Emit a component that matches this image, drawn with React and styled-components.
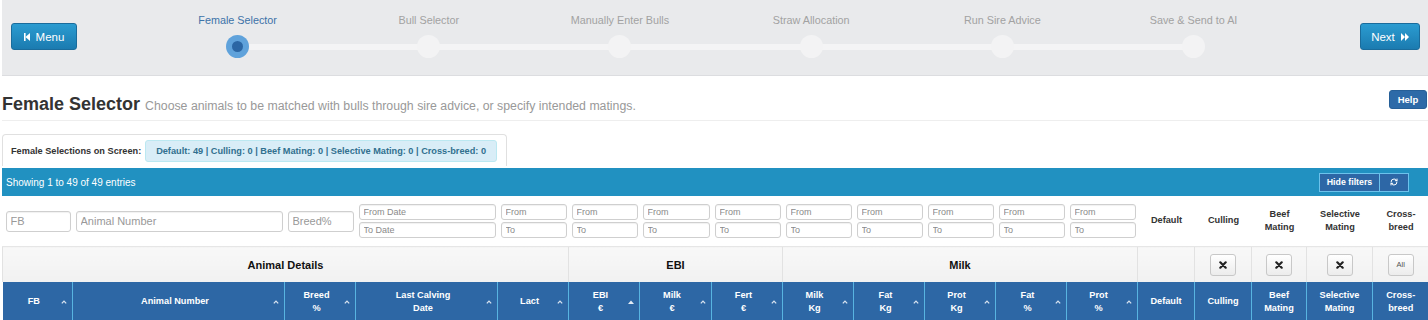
import React from 'react';
import styled, { createGlobalStyle } from 'styled-components';
import { RefreshCw } from 'lucide-react';

const GlobalStyle = createGlobalStyle`
  html, body {
    margin: 0;
    padding: 0;
    background: #fff;
    font-family: "Liberation Sans", Arial, sans-serif;
    color: #333;
    overflow: hidden;
  }
`;

const Page = styled.div`
  width: 1426px;
  padding-left: 2px;
`;

/* ---------- top wizard bar ---------- */
const TopBar = styled.div`
  display: flex;
  align-items: flex-start;
  height: 76px;
  background: #e9eaec;
  border-bottom: 1px solid #dcdde0;
  padding: 0 8px 0 9px;
  box-sizing: border-box;
`;

const NavButton = styled.button`
  margin-top: 23px;
  height: 27px;
  width: ${p => p.$w}px;
  display: flex;
  align-items: center;
  justify-content: center;
  gap: 6px;
  border: 1px solid #1a6c9c;
  border-radius: 3px;
  background: linear-gradient(#2b9cd1, #1b7bb0);
  color: #fff;
  font-family: inherit;
  font-size: 11.5px;
  padding: 0;
  margin-left: ${p => (p.$right ? 'auto' : '0')};
`;

const Stepper = styled.div`
  display: flex;
  margin-top: 14px;
  margin-left: 65px;
`;

const Step = styled.div`
  position: relative;
  width: 191.2px;
  display: flex;
  flex-direction: column;
  align-items: center;
  gap: 8px;

  &:not(:first-child)::before {
    content: '';
    position: absolute;
    left: -50%;
    right: 50%;
    top: 30px;
    height: 6px;
    background: #f4f4f5;
  }
`;

const StepLabel = styled.div`
  font-size: 10.8px;
  line-height: 13px;
  color: ${p => (p.$active ? '#3d72a8' : '#a2a2a2')};
  white-space: nowrap;
`;

const StepDot = styled.div`
  position: relative;
  z-index: 1;
  width: 23px;
  height: 23px;
  border-radius: 50%;
  background: ${p => (p.$active ? '#5fa2db' : '#f3f3f4')};
  display: flex;
  align-items: center;
  justify-content: center;

  &::after {
    content: '';
    display: ${p => (p.$active ? 'block' : 'none')};
    width: 11px;
    height: 11px;
    border-radius: 50%;
    background: #2b66a4;
  }
`;

/* ---------- title ---------- */
const TitleRow = styled.div`
  display: flex;
  align-items: flex-start;
  justify-content: space-between;
  padding: 14px 1px 3px 0;
  border-bottom: 1px solid #eeeeee;
`;

const Title = styled.h1`
  margin: 3px 0 0;
  font-size: 18px;
  line-height: 22px;
  font-weight: bold;
  color: #333;

  small {
    font-size: 12.3px;
    font-weight: normal;
    color: #999;
    margin-left: 5px;
  }
`;

const HelpButton = styled.button`
  height: 19px;
  width: 38px;
  padding: 0;
  border: 1px solid #265f98;
  border-radius: 3px;
  background: #2d6aa8;
  color: #fff;
  font-family: inherit;
  font-weight: bold;
  font-size: 9.5px;
`;

/* ---------- selection summary ---------- */
const SelectionBox = styled.div`
  margin-top: 13px;
  width: 505px;
  height: 32px;
  box-sizing: border-box;
  border: 1px solid #e0e0e0;
  border-bottom: none;
  border-radius: 4px 4px 0 0;
  display: flex;
  align-items: center;
  padding: 0 9px 0 8px;
  font-size: 9.2px;
  font-weight: bold;
`;

const Badge = styled.div`
  margin-left: auto;
  height: 22px;
  line-height: 20px;
  box-sizing: border-box;
  padding: 0 10px;
  background: #d9edf7;
  border: 1px solid #bce8f1;
  border-radius: 3px;
  color: #31708f;
`;

/* ---------- table toolbar ---------- */
const Toolbar = styled.div`
  margin-top: 2px;
  height: 28px;
  background: #2191c1;
  display: flex;
  align-items: center;
  padding: 0 19px 0 4px;
  color: #fff;
  font-size: 10px;
`;

const ToolGroup = styled.div`
  margin-left: auto;
  display: flex;
`;

const ToolButton = styled.button`
  height: 19px;
  width: ${p => p.$w}px;
  padding: 0;
  display: flex;
  align-items: center;
  justify-content: center;
  background: #2d67a6;
  border: 1px solid #6cc2ec;
  margin-left: -1px;
  color: #fff;
  font-family: inherit;
  font-weight: bold;
  font-size: 8.8px;
`;

/* ---------- grid ---------- */
const Table = styled.table`
  border-collapse: collapse;
  border-spacing: 0;
  table-layout: fixed;
  width: 1426px;
`;

const FilterCell = styled.td`
  height: 50px;
  padding: 0 2px 0 3px;
  vertical-align: middle;
  text-align: center;
  font-size: 9.2px;
  font-weight: bold;
  line-height: 13.5px;
  color: #333;
`;

const FilterInput = styled.input`
  display: block;
  width: 100%;
  box-sizing: border-box;
  height: ${p => (p.$small ? 16 : 21)}px;
  margin: ${p => (p.$small ? '2px 0' : '0')};
  padding: 0 4px;
  border: 1px solid #cfcfcf;
  border-radius: 3px;
  box-shadow: inset 0 1px 1px rgba(0, 0, 0, 0.06);
  font-family: inherit;
  font-size: ${p => (p.$small ? 9 : 11)}px;
  color: #555;

  &::placeholder {
    color: ${p => (p.$small ? '#8a8a8a' : '#999')};
  }
`;

const GroupCell = styled.td`
  height: 35px;
  padding: 0;
  background: linear-gradient(#f8f8f8, #f1f1f1);
  border-top: 1px solid #e6e6e6;
  border-left: 1px solid #e2e2e2;
  text-align: center;
  font-size: 11px;
  font-weight: bold;
  color: #111;
`;

const ClearButton = styled.button`
  width: 26px;
  height: 22px;
  padding: 0;
  display: inline-flex;
  align-items: center;
  justify-content: center;
  background: linear-gradient(#fff, #ececec);
  border: 1px solid #c8c8c8;
  border-radius: 3px;
  font-family: inherit;
  font-size: 7.5px;
  color: #555;
  vertical-align: middle;
`;

const HeadCell = styled.th`
  height: 40px;
  padding: 0 ${p => (p.$sort ? 5 : 3)}px 0 ${p => (p.$sort ? 4 : 3)}px;
  background: #2d67a5;
  border-left: 1px solid #58b4e1;
  color: #fff;
  font-size: 9.2px;
  font-weight: bold;
  line-height: 13.5px;
  vertical-align: middle;

  &:first-child {
    border-left: none;
  }
`;

const HeadInner = styled.div`
  display: flex;
  align-items: center;
`;

const HeadText = styled.span`
  flex: 1;
  text-align: center;
`;

const Caret = ({ sorted }) =>
  sorted ? (
    <svg width="6" height="4" viewBox="0 0 6 4">
      <path d="M0 4 L3 0.5 L6 4 Z" fill="#e4ecf5" />
    </svg>
  ) : (
    <svg width="6" height="4" viewBox="0 0 6 4">
      <path d="M0.8 3.4 L3 1.1 L5.2 3.4" fill="none" stroke="#d8e3f0" strokeWidth="1.3" />
    </svg>
  );

const StepBackIcon = () => (
  <svg width="6" height="8" viewBox="0 0 6 8">
    <rect x="0" y="0" width="1.6" height="8" fill="#fff" />
    <path d="M6 0 L1.4 4 L6 8 Z" fill="#fff" />
  </svg>
);

const ForwardIcon = () => (
  <svg width="8" height="8" viewBox="0 0 8 8">
    <path d="M0 0 L4 4 L0 8 Z M4 0 L8 4 L4 8 Z" fill="#fff" />
  </svg>
);

const XIcon = () => (
  <svg width="8" height="8" viewBox="0 0 8 8">
    <path d="M1.3 1.3 L6.7 6.7 M6.7 1.3 L1.3 6.7" stroke="#222" strokeWidth="2.2" strokeLinecap="round" />
  </svg>
);

const steps = [
  'Female Selector',
  'Bull Selector',
  'Manually Enter Bulls',
  'Straw Allocation',
  'Run Sire Advice',
  'Save & Send to AI',
];

const columns = [
  { w: 70, head: ['FB'], sort: true, filter: { type: 'text', ph: 'FB' } },
  { w: 212, head: ['Animal Number'], sort: true, filter: { type: 'text', ph: 'Animal Number' } },
  { w: 71, head: ['Breed', '%'], sort: true, filter: { type: 'text', ph: 'Breed%' } },
  { w: 142, head: ['Last Calving', 'Date'], sort: true, filter: { type: 'date' } },
  { w: 71, head: ['Lact'], sort: true, filter: { type: 'range' } },
  { w: 71, head: ['EBI', '€'], sort: true, sorted: true, filter: { type: 'range' } },
  { w: 72, head: ['Milk', '€'], sort: true, filter: { type: 'range' } },
  { w: 71, head: ['Fert', '€'], sort: true, filter: { type: 'range' } },
  { w: 71, head: ['Milk', 'Kg'], sort: true, filter: { type: 'range' } },
  { w: 71, head: ['Fat', 'Kg'], sort: true, filter: { type: 'range' } },
  { w: 71, head: ['Prot', 'Kg'], sort: true, filter: { type: 'range' } },
  { w: 71, head: ['Fat', '%'], sort: true, filter: { type: 'range' } },
  { w: 71, head: ['Prot', '%'], sort: true, filter: { type: 'range' } },
  { w: 57, head: ['Default'], filter: { type: 'label', text: ['Default'] } },
  { w: 57, head: ['Culling'], filter: { type: 'label', text: ['Culling'] } },
  { w: 55, head: ['Beef', 'Mating'], filter: { type: 'label', text: ['Beef', 'Mating'] } },
  { w: 66, head: ['Selective', 'Mating'], filter: { type: 'label', text: ['Selective', 'Mating'] } },
  { w: 56, head: ['Cross-', 'breed'], filter: { type: 'label', text: ['Cross-', 'breed'] } },
];

const Lines = ({ lines }) =>
  lines.map((l, i) => (
    <React.Fragment key={i}>
      {i > 0 && <br />}
      {l}
    </React.Fragment>
  ));

const Filter = ({ f }) => {
  if (f.type === 'text') return <FilterInput placeholder={f.ph} />;
  if (f.type === 'date')
    return (
      <>
        <FilterInput $small placeholder="From Date" />
        <FilterInput $small placeholder="To Date" />
      </>
    );
  if (f.type === 'range')
    return (
      <>
        <FilterInput $small placeholder="From" />
        <FilterInput $small placeholder="To" />
      </>
    );
  return <Lines lines={f.text} />;
};

const App = () => {
  return (
    <Page>
      <GlobalStyle />
      <TopBar>
        <NavButton $w={66}>
          <StepBackIcon />
          Menu
        </NavButton>
        <Stepper>
          {steps.map((s, i) => (
            <Step key={s}>
              <StepLabel $active={i === 0}>{s}</StepLabel>
              <StepDot $active={i === 0} />
            </Step>
          ))}
        </Stepper>
        <NavButton $w={60} $right>
          Next
          <ForwardIcon />
        </NavButton>
      </TopBar>

      <TitleRow>
        <Title>
          Female Selector
          <small>Choose animals to be matched with bulls through sire advice, or specify intended matings.</small>
        </Title>
        <HelpButton>Help</HelpButton>
      </TitleRow>

      <SelectionBox>
        Female Selections on Screen:
        <Badge>Default: 49 | Culling: 0 | Beef Mating: 0 | Selective Mating: 0 | Cross-breed: 0</Badge>
      </SelectionBox>

      <Toolbar>
        Showing 1 to 49 of 49 entries
        <ToolGroup>
          <ToolButton $w={61}>Hide filters</ToolButton>
          <ToolButton $w={30}>
            <RefreshCw size={8} strokeWidth={3} />
          </ToolButton>
        </ToolGroup>
      </Toolbar>

      <Table>
        <colgroup>
          {columns.map((c, i) => (
            <col key={i} style={{ width: c.w }} />
          ))}
        </colgroup>
        <thead>
          <tr>
            {columns.map((c, i) => (
              <FilterCell key={i}>
                <Filter f={c.filter} />
              </FilterCell>
            ))}
          </tr>
          <tr>
            <GroupCell colSpan={5}>Animal Details</GroupCell>
            <GroupCell colSpan={3}>EBI</GroupCell>
            <GroupCell colSpan={5}>Milk</GroupCell>
            <GroupCell />
            <GroupCell>
              <ClearButton><XIcon /></ClearButton>
            </GroupCell>
            <GroupCell>
              <ClearButton><XIcon /></ClearButton>
            </GroupCell>
            <GroupCell>
              <ClearButton><XIcon /></ClearButton>
            </GroupCell>
            <GroupCell>
              <ClearButton>All</ClearButton>
            </GroupCell>
          </tr>
          <tr>
            {columns.map((c, i) => (
              <HeadCell key={i} $sort={c.sort}>
                <HeadInner>
                  <HeadText>
                    <Lines lines={c.head} />
                  </HeadText>
                  {c.sort && <Caret sorted={c.sorted} />}
                </HeadInner>
              </HeadCell>
            ))}
          </tr>
        </thead>
      </Table>
    </Page>
  );
};

export default App;
